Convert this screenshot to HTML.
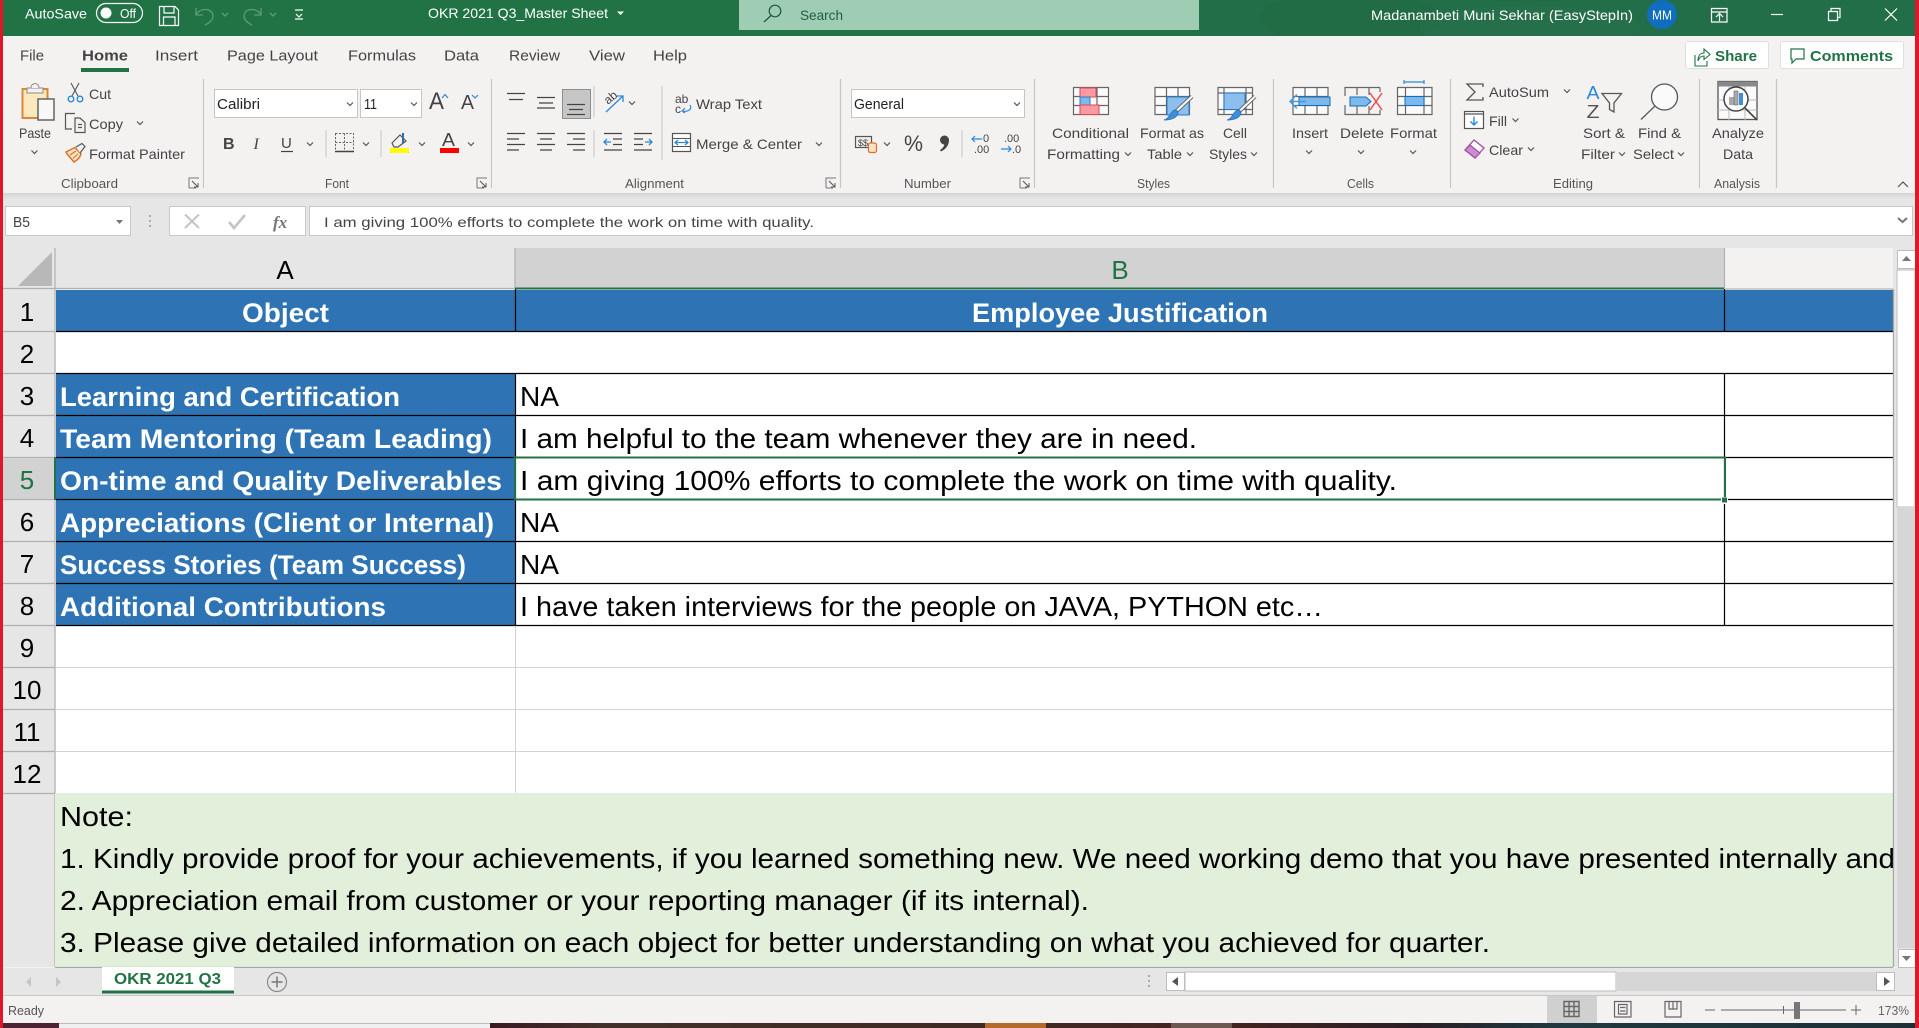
<!DOCTYPE html>
<html><head><meta charset="utf-8"><title>OKR 2021 Q3_Master Sheet</title>
<style>
html,body{margin:0;padding:0;background:#f3f2f1;overflow:hidden}
svg{display:block;position:absolute;left:0;top:0}
text{font-family:"Liberation Sans",sans-serif;white-space:pre}
.r{font-size:14px;fill:#444}
.g{font-size:12.5px;fill:#555}
.t{font-size:15px;fill:#444}
.w{font-size:14px;fill:#fff}
.c{font-size:27.5px;fill:#000}
.b{font-size:27px;fill:#fff;font-weight:bold}
.h{font-size:26px;fill:#000}
</style></head><body>
<svg width="1919" height="1028" viewBox="0 0 1919 1028" xmlns="http://www.w3.org/2000/svg">
<defs>
<path id="c" d="M-3-1.5L0 1.5L3-1.5" fill="none" stroke="#555" stroke-width="1.2"/>
<g id="l"><path d="M-5 5V-5H5" fill="none" stroke="#777" stroke-width="1"/><path d="M-2-2L4 4M4 0V4H0" fill="none" stroke="#555" stroke-width="1"/><path d="M-5 5H2" stroke="#777" stroke-width="1"/></g>
<linearGradient id="sh" x1="0" x2="0" y1="0" y2="1"><stop offset="0" stop-color="#d4d4d4"/><stop offset="1" stop-color="#e6e6e6"/></linearGradient>
<linearGradient id="bs" x1="0" x2="1" y1="0" y2="0">
<stop offset="0" stop-color="#3a1a22"/><stop offset=".08" stop-color="#44302a"/><stop offset=".35" stop-color="#402a22"/><stop offset=".5" stop-color="#47241f"/><stop offset=".65" stop-color="#2a1f26"/><stop offset=".75" stop-color="#1f3a40"/><stop offset="1" stop-color="#1d3036"/></linearGradient>
</defs>

<!-- base -->
<rect width="1919" height="1028" fill="#f3f2f1"/>
<!-- title bar -->
<rect width="1919" height="36" fill="#217346"/>
<rect x="1200" width="719" height="36" fill="#24694a" opacity=".55"/>
<ellipse cx="1350" cy="18" rx="90" ry="26" fill="#1f6a42" opacity=".5"/>
<ellipse cx="1530" cy="28" rx="110" ry="22" fill="#2a6f4e" opacity=".5"/>
<rect y="36" width="1919" height="157" fill="#f3f2f1"/>
<text class="w" x="25" y="18.5" textLength="62" lengthAdjust="spacingAndGlyphs">AutoSave</text>
<rect x="96.5" y="3.5" width="46" height="19" rx="9.5" fill="none" stroke="#fff" stroke-width="1.2"/>
<circle cx="106" cy="13" r="5.5" fill="#fff"/>
<text class="w" style="font-size:12.5px" x="120" y="18" textLength="16" lengthAdjust="spacingAndGlyphs">Off</text>
<path d="M159.5 6.5H175L178.5 10V25.5H159.5Z M164 6.5V13H174V6.5 M163.5 25.5V17H175V25.5" fill="none" stroke="#fff" stroke-width="1.2"/>
<g fill="none" stroke="#5d9c7a" stroke-width="1.3">
<path d="M196 8V15H203 M196 15C200 7 213 8 213 16C213 20 209 23 205 25"/>
<path d="M222 13l3 3l3-3" />
<path d="M261 8V15H254 M261 15C257 7 244 8 244 16C244 20 248 23 252 25"/>
<path d="M270 13l3 3l3-3"/>
</g>
<path d="M295 10H303 M296 14L299 17L302 14M295 19H303" fill="none" stroke="#fff" stroke-width="1.2"/>
<text class="w" x="428" y="18" textLength="180" lengthAdjust="spacingAndGlyphs">OKR 2021 Q3_Master Sheet</text>
<path d="M617 11.5H624L620.5 15Z" fill="#fff"/>
<rect x="739" width="460" height="30" fill="#9fcdb3"/>
<circle cx="775" cy="11" r="5.8" fill="none" stroke="#1c5a39" stroke-width="1.2"/>
<path d="M771 15.5L764 22" stroke="#1c5a39" stroke-width="1.3"/>
<text x="800" y="20" font-size="14" fill="#1f5f3e" textLength="43" lengthAdjust="spacingAndGlyphs">Search</text>
<text class="w" x="1371" y="20" textLength="262" lengthAdjust="spacingAndGlyphs">Madanambeti Muni Sekhar (EasyStepIn)</text>
<ellipse cx="1662" cy="14.5" rx="15" ry="14.5" fill="#106ebe"/>
<text x="1652" y="19.5" font-size="13" fill="#fff" textLength="20" lengthAdjust="spacingAndGlyphs">MM</text>
<path d="M1711.5 8.5H1727V22H1711.5Z M1711.5 12H1727 M1716 17L1719.5 13.5L1723 17 M1719.5 14V21" fill="none" stroke="#fff" stroke-width="1.2"/>
<path d="M1771 14.5H1783" stroke="#fff" stroke-width="1.2"/>
<path d="M1828.5 11.5H1837.5V20.5H1828.5Z M1831 11V8.5H1840V17.5H1838" fill="none" stroke="#fff" stroke-width="1.2"/>
<path d="M1885 8.5L1897 20.5M1897 8.5L1885 20.5" stroke="#fff" stroke-width="1.2"/>

<!-- tabs -->
<text class="t" x="20" y="60.5" textLength="24" lengthAdjust="spacingAndGlyphs">File</text>
<text class="t" x="82" y="60.5" textLength="46" lengthAdjust="spacingAndGlyphs" style="font-weight:bold">Home</text>
<text class="t" x="155" y="60.5" textLength="43" lengthAdjust="spacingAndGlyphs">Insert</text>
<text class="t" x="227" y="60.5" textLength="91" lengthAdjust="spacingAndGlyphs">Page Layout</text>
<text class="t" x="348" y="60.5" textLength="68" lengthAdjust="spacingAndGlyphs">Formulas</text>
<text class="t" x="444" y="60.5" textLength="35" lengthAdjust="spacingAndGlyphs">Data</text>
<text class="t" x="509" y="60.5" textLength="51" lengthAdjust="spacingAndGlyphs">Review</text>
<text class="t" x="589" y="60.5" textLength="36" lengthAdjust="spacingAndGlyphs">View</text>
<text class="t" x="653" y="60.5" textLength="34" lengthAdjust="spacingAndGlyphs">Help</text>
<rect x="81" y="68" width="48" height="4" fill="#217346"/>
<!-- share/comments -->
<rect x="1685.5" y="41.5" width="83" height="27" rx="2" fill="#fff" stroke="#e1dfdd"/>
<path d="M1695 55V66H1707V61 M1698 61C1698 55 1701 53 1704 53V49L1710 54.5L1704 59.5V56C1701 56 1699 58 1698 61Z" fill="none" stroke="#217346" stroke-width="1.1"/>
<text x="1715" y="61" font-size="15" font-weight="bold" fill="#217346" textLength="42" lengthAdjust="spacingAndGlyphs">Share</text>
<rect x="1780.5" y="41.5" width="123" height="27" rx="2" fill="#fff" stroke="#e1dfdd"/>
<path d="M1791 49H1804V59H1796L1792 63V59H1791Z" fill="none" stroke="#217346" stroke-width="1.2"/>
<text x="1810" y="61" font-size="15" font-weight="bold" fill="#217346" textLength="83" lengthAdjust="spacingAndGlyphs">Comments</text>

<!-- ribbon shadow -->
<rect x="3" y="193" width="1912" height="55" fill="#e6e6e6"/>
<rect x="3" y="193" width="1912" height="6" fill="url(#sh)"/>

<!-- group separators -->
<g stroke="#c8c6c4" stroke-width="1.2">
<path d="M203.5 79V188M491.5 79V188M840.5 79V188M1034.5 79V188M1273.5 79V188M1450.5 79V188M1699.5 79V188M1776.5 79V188"/>
<path d="M326 130V157M381 130V157M594 86V117M594 130V157M662 86V160M962 130V157" stroke="#d0cecc"/>
</g>
<!-- group labels -->
<text class="g" x="61" y="188" textLength="57" lengthAdjust="spacingAndGlyphs">Clipboard</text>
<text class="g" x="325" y="188" textLength="24" lengthAdjust="spacingAndGlyphs">Font</text>
<text class="g" x="625" y="188" textLength="59" lengthAdjust="spacingAndGlyphs">Alignment</text>
<text class="g" x="904" y="188" textLength="47" lengthAdjust="spacingAndGlyphs">Number</text>
<text class="g" x="1137" y="188" textLength="33" lengthAdjust="spacingAndGlyphs">Styles</text>
<text class="g" x="1347" y="188" textLength="27" lengthAdjust="spacingAndGlyphs">Cells</text>
<text class="g" x="1553" y="188" textLength="40" lengthAdjust="spacingAndGlyphs">Editing</text>
<text class="g" x="1714" y="188" textLength="46" lengthAdjust="spacingAndGlyphs">Analysis</text>
<use href="#l" x="194" y="183"/><use href="#l" x="482" y="183"/><use href="#l" x="831" y="183"/><use href="#l" x="1025" y="183"/>
<path d="M1898 187L1903 182L1908 187" fill="none" stroke="#555" stroke-width="1.2"/>

<!-- clipboard -->
<rect x="22.5" y="89" width="25" height="29" fill="#fce8bd" stroke="#d98a36" stroke-width="2"/>
<rect x="27" y="88" width="16" height="5" fill="#f3f2f1" stroke="#8a8a8a"/>
<path d="M31 88C31 82 39 82 39 88" fill="#f3f2f1" stroke="#8a8a8a"/>
<rect x="38" y="99" width="16" height="21" fill="#f7f7f7" stroke="#5a5a5a" stroke-width="1.4"/>
<text class="r" x="19" y="138" textLength="32" lengthAdjust="spacingAndGlyphs">Paste</text>
<use href="#c" x="34.5" y="152"/>
<path d="M71 83L78 96M79 83L72 96" stroke="#555" stroke-width="1.1"/>
<circle cx="71" cy="99" r="2.8" fill="none" stroke="#2b88d8" stroke-width="1.4"/><circle cx="80" cy="99" r="2.8" fill="none" stroke="#2b88d8" stroke-width="1.4"/>
<text class="r" x="89" y="99" textLength="22" lengthAdjust="spacingAndGlyphs">Cut</text>
<path d="M72 129H65.5V113.5H75M75 118H80L85 122.5V132.5H75Z M78 124.5H82M78 127.5H82" fill="none" stroke="#555" stroke-width="1.2"/>
<text class="r" x="89" y="129" textLength="34" lengthAdjust="spacingAndGlyphs">Copy</text>
<use href="#c" x="140" y="123"/>
<path d="M66 152L75 147.5L81 154C80 158 77 160 74 162C71 158 68 156 66 152Z" fill="#fbe3c4" stroke="#d9702b" stroke-width="1.5"/>
<path d="M70 155L76 151M73 158.5L78 154" stroke="#d9702b" stroke-width="1.1"/>
<path d="M76 147L82 143.5L85 146.500L80 153" fill="#f3f2f1" stroke="#555" stroke-width="1.2"/>
<text class="r" x="89" y="159" textLength="96" lengthAdjust="spacingAndGlyphs">Format Painter</text>

<!-- font -->
<rect x="214.5" y="89.5" width="143" height="28" fill="#fff" stroke="#c8c6c4"/>
<rect x="360.5" y="89.5" width="61" height="28" fill="#fff" stroke="#c8c6c4"/>
<text x="217" y="109" font-size="15" fill="#222" textLength="43" lengthAdjust="spacingAndGlyphs">Calibri</text>
<text x="364" y="109" font-size="15" fill="#222" textLength="13" lengthAdjust="spacingAndGlyphs">11</text>
<use href="#c" x="350" y="104"/><use href="#c" x="414" y="104"/>
<text x="429" y="109" font-size="24" fill="#444" textLength="15" lengthAdjust="spacingAndGlyphs">A</text>
<path d="M442 98L445 94.5L448 98" fill="none" stroke="#2b88d8" stroke-width="1.2"/>
<text x="461" y="109" font-size="20" fill="#444" textLength="13" lengthAdjust="spacingAndGlyphs">A</text>
<path d="M472 95L475 98L478 95" fill="none" stroke="#2b88d8" stroke-width="1.2"/>
<text x="223" y="149" font-size="16" font-weight="bold" fill="#444">B</text>
<text x="253.5" y="149" font-size="16" font-style="italic" fill="#444" style="font-family:'Liberation Serif',serif">I</text>
<text x="281" y="148" font-size="15" fill="#444">U</text><path d="M281 151.5H293" stroke="#444" stroke-width="1.2"/>
<use href="#c" x="310" y="144"/>
<path d="M335.5 133.5H353.5V151.5H335.5Z M344.5 133.5V151.5M335.5 142.5H353.5" fill="none" stroke="#666" stroke-width="1" stroke-dasharray="2 1.5"/><path d="M335 151.5H354" stroke="#444" stroke-width="1.5"/>
<use href="#c" x="366" y="144"/>
<path d="M392 143L400 135L406 141L398 147H394Z" fill="none" stroke="#555" stroke-width="1.2"/><path d="M403 133V143" stroke="#2b6cb0" stroke-width="2"/>
<rect x="390" y="148" width="19" height="5" fill="#ff0"/>
<use href="#c" x="422" y="144"/>
<text x="442" y="146" font-size="18" fill="#444" textLength="13" lengthAdjust="spacingAndGlyphs">A</text>
<rect x="440" y="148" width="19" height="5" fill="#f00"/>
<use href="#c" x="471" y="144"/>

<!-- alignment -->
<rect x="562.5" y="89.5" width="28" height="29" fill="#c6c6c6" stroke="#8e8e8e"/>
<g stroke="#444" stroke-width="1.3">
<path d="M507 93.5H525M509 99.5H523"/>
<path d="M537 97.5H555M539 103H553M537 108H555"/>
<path d="M567 104.5H585M569 109.5H583M567 114.5H585"/>
<path d="M507 133.5H525M507 139H519M507 144.5H525M507 150H519"/>
<path d="M537 133.5H555M540 139H552M537 144.5H555M540 150H552"/>
<path d="M567 133.5H585M573 139H585M567 144.5H585M573 150H585"/>
<path d="M604 133.5H622M613 139H622M613 144.5H622M604 150H622"/>
<path d="M634 133.5H652M634 139H643M634 144.5H643M634 150H652"/>
</g>
<path d="M604 142H611M607 139L604 142L607 145" fill="none" stroke="#2b88d8" stroke-width="1.3"/>
<path d="M645 142H652M649 139L652 142L649 145" fill="none" stroke="#2b88d8" stroke-width="1.3"/>
<text x="604" y="102" font-size="12" fill="#444" transform="rotate(-40 610 98)">ab</text>
<path d="M606 112L623 96M617 96H623V102" fill="none" stroke="#2b88d8" stroke-width="1.3"/>
<use href="#c" x="632" y="103"/>
<text x="675" y="103" font-size="12" fill="#444">ab</text><text x="675" y="113" font-size="12" fill="#444">c</text>
<path d="M690 105C693 110 687 112 682 111M685 108L682 111L685 113" fill="none" stroke="#2b88d8" stroke-width="1.2"/>
<text class="r" x="696" y="109" textLength="66" lengthAdjust="spacingAndGlyphs">Wrap Text</text>
<rect x="672.5" y="133.5" width="18" height="18" fill="#fff" stroke="#555" stroke-width="1.2"/>
<path d="M672.5 138.5H690.5M672.5 146.5H690.5" stroke="#555" stroke-width="1"/>
<path d="M675 142.5H688M678 140L675 142.5L678 145M685 140L688 142.5L685 145" fill="none" stroke="#2b88d8" stroke-width="1.3"/>
<text class="r" x="696" y="149" textLength="106" lengthAdjust="spacingAndGlyphs">Merge &amp; Center</text>
<use href="#c" x="819" y="144"/>

<!-- number -->
<rect x="851.5" y="89.5" width="173" height="28" fill="#fff" stroke="#c8c6c4"/>
<text x="854" y="109" font-size="15" fill="#222" textLength="50" lengthAdjust="spacingAndGlyphs">General</text>
<use href="#c" x="1017" y="104"/>
<rect x="855.5" y="136.5" width="16" height="11" fill="#eee" stroke="#555" stroke-width="1.2"/>
<text x="858" y="146" font-size="9" fill="#444">$$</text>
<rect x="868.5" y="143" width="8" height="9.5" rx="2" fill="#fbe3c4" stroke="#d9702b" stroke-width="1.2"/>
<use href="#c" x="887" y="144"/>
<text x="904" y="151" font-size="22" fill="#444" textLength="19" lengthAdjust="spacingAndGlyphs">%</text>
<path d="M940 140a4.5 4.5 0 1 1 9 0c0 6-4 9.500-8 11.500l-1-1.500c3-2 4-3.500 4.300-5.500a4.500 4.500 0 0 1-4.300-4.500Z" fill="#444"/>
<text x="983" y="142" font-size="11" fill="#444">0</text><text x="974" y="153" font-size="11" fill="#444">.00</text>
<path d="M972 139H982M975 136L972 139L975 142" fill="none" stroke="#2b88d8" stroke-width="1.2"/>
<text x="1004" y="142" font-size="11" fill="#444">.00</text><text x="1012" y="153" font-size="11" fill="#444">.0</text>
<path d="M1001 149H1011M1008 146L1011 149L1008 152" fill="none" stroke="#2b88d8" stroke-width="1.2"/>

<!-- styles: conditional -->
<g fill="#fbfbfb" stroke="#666" stroke-width="1.2">
<path d="M1073.5 87.5H1108.5V114.5H1073.5ZM1073.5 96.5H1108.5M1073.5 105.5H1108.5M1085 87.5V114.5M1097 87.5V114.5"/>
</g>
<rect x="1080" y="88" width="16" height="9" fill="#fb9aa3" stroke="#e0474f"/>
<rect x="1080" y="97" width="10" height="8" fill="#7fb8ea" stroke="#2b78c5"/>
<rect x="1080" y="105" width="19" height="9.5" fill="#fb9aa3" stroke="#e0474f"/>
<text class="r" x="1052" y="138" textLength="77" lengthAdjust="spacingAndGlyphs">Conditional</text>
<text class="r" x="1047" y="159" textLength="73" lengthAdjust="spacingAndGlyphs">Formatting</text>
<use href="#c" x="1128" y="154"/>
<!-- format as table -->
<g fill="#fbfbfb" stroke="#666" stroke-width="1.2"><path d="M1155 87.5H1189.5V114.5H1155ZM1155 96.5H1189.5M1155 105.5H1189.5M1166.5 87.5V114.5M1178 87.5V114.5"/></g>
<rect x="1167" y="97" width="22" height="18" fill="#8cbfee" stroke="#2b78c5"/>
<path d="M1192 96.5L1176 111.500" stroke="#666" stroke-width="4"/><path d="M1192 96.5L1176 111.500" stroke="#fff" stroke-width="2"/>
<path d="M1164 120C1170 119 1170 111 1175 110C1181 111 1178 120 1164 120Z" fill="#3f8fd8" stroke="#2b78c5"/>
<text class="r" x="1140" y="138" textLength="64" lengthAdjust="spacingAndGlyphs">Format as</text>
<text class="r" x="1147" y="159" textLength="35" lengthAdjust="spacingAndGlyphs">Table</text>
<use href="#c" x="1190" y="154"/>
<!-- cell styles -->
<g fill="#fbfbfb" stroke="#666" stroke-width="1.2"><path d="M1218 87.5H1252.5V114.5H1218ZM1218 93H1252.500M1218 109.500H1252.500M1224 87.5V114.5M1246 87.500V114.500"/></g>
<rect x="1224" y="93" width="21" height="16.500" fill="#8cbfee" stroke="#2b78c5"/>
<path d="M1255 96.5L1239 111.500" stroke="#666" stroke-width="4"/><path d="M1255 96.5L1239 111.500" stroke="#fff" stroke-width="2"/>
<path d="M1227 120C1233 119 1233 111 1238 110C1244 111 1241 120 1227 120Z" fill="#3f8fd8" stroke="#2b78c5"/>
<text class="r" x="1223" y="138" textLength="24" lengthAdjust="spacingAndGlyphs">Cell</text>
<text class="r" x="1209" y="159" textLength="38" lengthAdjust="spacingAndGlyphs">Styles</text>
<use href="#c" x="1254" y="154"/>

<!-- cells: insert -->
<g fill="#fbfbfb" stroke="#666" stroke-width="1.2"><path d="M1293 87.5H1328V114.5H1293ZM1293 96.5H1328M1293 105.5H1328M1305 87.5V114.5M1317 87.5V114.5"/></g>
<rect x="1299" y="97" width="31" height="8.5" fill="#7fb8ea" stroke="#106ebe"/>
<path d="M1290 101.5H1306M1297 94.5L1290 101.5L1297 108.5" fill="none" stroke="#3f9ae0" stroke-width="1.4"/>
<text class="r" x="1292" y="138" textLength="36" lengthAdjust="spacingAndGlyphs">Insert</text>
<use href="#c" x="1309" y="152"/>
<!-- delete -->
<g fill="none" stroke="#666" stroke-width="1.2"><path d="M1345 96V87.5H1380M1345 105V114.5H1380V110M1380 87.5V92M1357 87.5V95M1369 87.5V95M1357 106V114.5M1369 106V114.5"/></g>
<path d="M1350 97H1366L1371 101.5L1366 106H1350Z" fill="#7fb8ea" stroke="#106ebe"/>
<path d="M1370 93L1382 110M1382 93L1370 110" stroke="#e84d4d" stroke-width="1.5"/>
<text class="r" x="1340" y="138" textLength="44" lengthAdjust="spacingAndGlyphs">Delete</text>
<use href="#c" x="1361" y="152"/>
<!-- format -->
<path d="M1404 82H1424M1404 80V84M1424 80V84" stroke="#2b88d8" stroke-width="1.2" fill="none"/>
<g fill="#fbfbfb" stroke="#666" stroke-width="1.2"><path d="M1397.5 87.5H1432V114.5H1397.5ZM1397.5 96.5H1432M1397.5 105.5H1432M1405.5 87.5V114.5M1424 87.5V114.5"/></g>
<rect x="1405" y="96.5" width="19" height="9" fill="#7fb8ea" stroke="#106ebe"/>
<text class="r" x="1390" y="138" textLength="47" lengthAdjust="spacingAndGlyphs">Format</text>
<use href="#c" x="1413" y="152"/>

<!-- editing -->
<path d="M1483 87V84H1467L1475 92L1467 100H1483V97" fill="none" stroke="#555" stroke-width="1.3"/>
<text class="r" x="1489" y="97" textLength="60" lengthAdjust="spacingAndGlyphs">AutoSum</text>
<use href="#c" x="1567" y="91"/>
<rect x="1464.5" y="111.5" width="19" height="17" fill="#fff" stroke="#555" stroke-width="1.2"/><path d="M1464.5 114H1483.5" stroke="#555" stroke-width="1.2"/>
<path d="M1474 116.5V125M1470.5 121.5L1474 125L1477.5 121.5" fill="none" stroke="#2b88d8" stroke-width="1.4"/>
<text class="r" x="1489" y="126" textLength="18" lengthAdjust="spacingAndGlyphs">Fill</text>
<use href="#c" x="1515.5" y="120"/>
<path d="M1474 140L1484 148L1475 158L1465 150Z" fill="#fff" stroke="#a349a4" stroke-width="1.3"/>
<path d="M1465 150L1470 145L1480 153L1475 158Z" fill="#c98fcc" stroke="#a349a4" stroke-width="1.2"/>
<text class="r" x="1489" y="155" textLength="34" lengthAdjust="spacingAndGlyphs">Clear</text>
<use href="#c" x="1531" y="149"/>
<text x="1586.5" y="99" font-size="18" fill="#2b88d8" textLength="13" lengthAdjust="spacingAndGlyphs">A</text>
<text x="1586.5" y="118" font-size="18" fill="#555" textLength="13" lengthAdjust="spacingAndGlyphs">Z</text>
<path d="M1602 93.5H1621.5L1614 103V112L1609.5 109.5V103Z" fill="none" stroke="#555" stroke-width="1.3"/>
<text class="r" x="1583" y="138" textLength="42" lengthAdjust="spacingAndGlyphs">Sort &amp;</text>
<text class="r" x="1581" y="159" textLength="34" lengthAdjust="spacingAndGlyphs">Filter</text>
<use href="#c" x="1622" y="154"/>
<circle cx="1664.5" cy="97" r="13" fill="#fafafa" stroke="#555" stroke-width="1.3"/>
<path d="M1655 106L1641 119.5" stroke="#555" stroke-width="1.3"/>
<text class="r" x="1638" y="138" textLength="43" lengthAdjust="spacingAndGlyphs">Find &amp;</text>
<text class="r" x="1633" y="159" textLength="41" lengthAdjust="spacingAndGlyphs">Select</text>
<use href="#c" x="1681" y="154"/>

<!-- analyze -->
<rect x="1718" y="81.5" width="39" height="38" fill="#fafafa" stroke="#555" stroke-width="1.3"/>
<rect x="1718" y="81.5" width="39" height="5" fill="#888"/>
<path d="M1718 100H1757M1718 110H1757M1729 86V120M1745 86V120" stroke="#bbb" stroke-width="1"/>
<circle cx="1736" cy="99" r="12" fill="#fff" stroke="#444" stroke-width="1.5"/>
<rect x="1729" y="97" width="5" height="8" fill="#aaa"/><rect x="1734" y="91" width="4" height="14" fill="#aaa" stroke="#666" stroke-width=".6"/><rect x="1739" y="93" width="4" height="12" fill="#3f8fd8"/>
<path d="M1745 108L1757 120" stroke="#444" stroke-width="1.6"/>
<text class="r" x="1712" y="138" textLength="52" lengthAdjust="spacingAndGlyphs">Analyze</text>
<text class="r" x="1723" y="159" textLength="30" lengthAdjust="spacingAndGlyphs">Data</text>

<!-- formula bar -->
<rect x="5.5" y="206.5" width="125" height="29" fill="#fff" stroke="#c8c8c8"/>
<text x="13" y="227" font-size="14.5" fill="#444" textLength="17" lengthAdjust="spacingAndGlyphs">B5</text>
<path d="M116 220H123L119.5 224Z" fill="#777"/>
<path d="M150 215v2M150 220v2M150 225v2" stroke="#aaa" stroke-width="2"/>
<rect x="169.5" y="206.5" width="136" height="29" fill="#fff" stroke="#c8c8c8"/>
<path d="M185 214.5L199 228M199 214.5L185 228" stroke="#c4c4c4" stroke-width="2"/>
<path d="M229 222L234 228L245 215" fill="none" stroke="#c4c4c4" stroke-width="2.6"/>
<text x="273" y="228" font-size="17" font-style="italic" fill="#777" style="font-family:'Liberation Serif',serif;font-weight:bold">fx</text>
<rect x="309.5" y="206.5" width="1603" height="29" fill="#fff" stroke="#c8c8c8"/>
<text x="324" y="227" font-size="14" fill="#444" textLength="490" lengthAdjust="spacingAndGlyphs">I am giving 100% efforts to complete the work on time with quality.</text>
<path d="M1898 218L1902.5 222L1907 218" fill="none" stroke="#777" stroke-width="2"/>

<!-- headers -->
<rect x="3" y="248" width="52" height="719" fill="#e6e6e6"/>
<rect x="55" y="248" width="460" height="41" fill="#e6e6e6"/>
<rect x="515" y="248" width="1209" height="41" fill="#d2d2d2"/>
<path d="M18 286H52V252Z" fill="#b8b8b8"/>
<path d="M3 288.5H515M55 248V967M515 248V288M1724.5 248V288" stroke="#b0b0b0" stroke-width="1.2" fill="none"/>
<rect x="515" y="287.5" width="1209" height="2" fill="#217346"/>
<path d="M1724 289H1893" stroke="#a6a6a6"/>
<text class="h" x="285" y="279" text-anchor="middle">A</text>
<text class="h" x="1120" y="279" text-anchor="middle" style="fill:#217346">B</text>
<!-- row header separators -->
<path d="M3 331.5H55M3 373.5H55M3 415.5H55M3 457.5H55M3 499.5H55M3 541.5H55M3 583.5H55M3 625.5H55M3 667.5H55M3 709.5H55M3 751.5H55M3 793.5H55" stroke="#b0b0b0" stroke-width="1.2"/>
<rect x="3" y="458" width="52" height="41" fill="#d2d2d2"/>
<rect x="54" y="457" width="2" height="43" fill="#217346"/>
<text class="h" x="27" y="321" text-anchor="middle">1</text>
<text class="h" x="27" y="363" text-anchor="middle">2</text>
<text class="h" x="27" y="405" text-anchor="middle">3</text>
<text class="h" x="27" y="447" text-anchor="middle">4</text>
<text class="h" x="27" y="489" text-anchor="middle" style="fill:#217346">5</text>
<text class="h" x="27" y="531" text-anchor="middle">6</text>
<text class="h" x="27" y="573" text-anchor="middle">7</text>
<text class="h" x="27" y="615" text-anchor="middle">8</text>
<text class="h" x="27" y="657" text-anchor="middle">9</text>
<text class="h" x="27" y="699" text-anchor="middle">10</text>
<text class="h" x="27" y="741" text-anchor="middle">11</text>
<text class="h" x="27" y="783" text-anchor="middle">12</text>

<!-- sheet -->
<rect x="56" y="290" width="1837" height="503" fill="#fff"/>
<rect x="56" y="290" width="1837" height="41" fill="#2e74b5"/>
<rect x="56" y="374" width="459" height="251" fill="#2e74b5"/>
<path d="M56 667.5H1893M56 709.5H1893M56 751.5H1893M515.5 625V793" stroke="#d4d4d4"/>
<g stroke="#000" stroke-width="1.2">
<path d="M56 331.5H1893M56 373.5H1893M56 415.5H1893M56 457.5H1893M56 499.5H1893M56 541.5H1893M56 583.5H1893M515 625.5H1893M56 625.5H515"/>
<path d="M515.5 289V331M1724.5 289V331M515.5 373V625M1724.5 373V625"/>
</g>
<rect x="55" y="793" width="1838" height="174" fill="#e2efda"/>

<text class="b" x="242" y="322" textLength="87" lengthAdjust="spacingAndGlyphs">Object</text>
<text class="b" x="972" y="322" textLength="296" lengthAdjust="spacingAndGlyphs">Employee Justification</text>
<text class="b" x="60" y="406" textLength="340" lengthAdjust="spacingAndGlyphs">Learning and Certification</text>
<text class="b" x="60" y="448" textLength="432" lengthAdjust="spacingAndGlyphs">Team Mentoring (Team Leading)</text>
<text class="b" x="60" y="490" textLength="442" lengthAdjust="spacingAndGlyphs">On-time and Quality Deliverables</text>
<text class="b" x="60" y="532" textLength="434" lengthAdjust="spacingAndGlyphs">Appreciations (Client or Internal)</text>
<text class="b" x="60" y="574" textLength="406" lengthAdjust="spacingAndGlyphs">Success Stories (Team Success)</text>
<text class="b" x="60" y="616" textLength="326" lengthAdjust="spacingAndGlyphs">Additional Contributions</text>
<text class="c" x="520" y="406" textLength="39" lengthAdjust="spacingAndGlyphs">NA</text>
<text class="c" x="520" y="448" textLength="677" lengthAdjust="spacingAndGlyphs">I am helpful to the team whenever they are in need.</text>
<text class="c" x="520" y="490" textLength="877" lengthAdjust="spacingAndGlyphs">I am giving 100% efforts to complete the work on time with quality.</text>
<text class="c" x="520" y="532" textLength="39" lengthAdjust="spacingAndGlyphs">NA</text>
<text class="c" x="520" y="574" textLength="39" lengthAdjust="spacingAndGlyphs">NA</text>
<text class="c" x="520" y="616" textLength="803" lengthAdjust="spacingAndGlyphs">I have taken interviews for the people on JAVA, PYTHON etc…</text>
<text class="c" x="60" y="826" textLength="73" lengthAdjust="spacingAndGlyphs">Note:</text>
<text class="c" x="60" y="868" textLength="1835" lengthAdjust="spacingAndGlyphs">1. Kindly provide proof for your achievements, if you learned something new. We need working demo that you have presented internally and</text>
<text class="c" x="60" y="910" textLength="1029" lengthAdjust="spacingAndGlyphs">2. Appreciation email from customer or your reporting manager (if its internal).</text>
<text class="c" x="60" y="952" textLength="1430" lengthAdjust="spacingAndGlyphs">3. Please give detailed information on each object for better understanding on what you achieved for quarter.</text>

<!-- selection -->
<path d="M515 457.5H1725V499.5H515Z" fill="none" stroke="#217346" stroke-width="2"/>
<rect x="1721" y="497" width="7" height="7" fill="#fff"/>
<rect x="1722" y="497.5" width="5" height="5" fill="#217346"/>

<!-- v-scroll -->
<rect x="1893" y="248" width="22" height="719" fill="#e6e6e6"/>
<path d="M1893.5 289V967M55 967.5H1893" stroke="#a6a6a6" stroke-width="1.3"/>
<rect x="1897.5" y="250.5" width="18" height="18" fill="#fff" stroke="#bdbdbd"/>
<path d="M1902 261L1906.5 256L1911 261Z" fill="#777"/>
<rect x="1897" y="270" width="18" height="237" fill="#fff" stroke="#bdbdbd"/>
<rect x="1897" y="507" width="18" height="441" fill="#d6d6d6"/>
<rect x="1898.5" y="949.5" width="17" height="18" fill="#fff" stroke="#bdbdbd"/>
<path d="M1902 956L1906.5 961L1911 956Z" fill="#777"/>

<!-- tab bar -->
<rect x="3" y="968" width="1912" height="28" fill="#e6e6e6"/>
<rect x="3" y="995" width="1912" height="1" fill="#c8c8c8"/>
<path d="M31 977V987L26 982ZM56 977V987L61 982Z" fill="#c4c4c4"/>
<rect x="102" y="967" width="132" height="26" fill="#fff"/>
<rect x="102" y="990.5" width="132" height="3" fill="#217346"/>
<text x="114" y="984" font-size="16" font-weight="bold" fill="#217346" textLength="107" lengthAdjust="spacingAndGlyphs">OKR 2021 Q3</text>
<circle cx="277" cy="982" r="9.5" fill="none" stroke="#8a8a8a" stroke-width="1.2"/>
<path d="M271.5 982H282.5M277 976.5V987.5" stroke="#777" stroke-width="1.5"/>
<path d="M1149 975v2M1149 980v2M1149 985v2" stroke="#aaa" stroke-width="2"/>
<rect x="1166.5" y="972.5" width="18" height="18" fill="#fff" stroke="#bdbdbd"/>
<path d="M1178 977V986L1172 981.5Z" fill="#555"/>
<rect x="1185" y="972" width="431" height="19" fill="#fff" stroke="#bdbdbd"/>
<rect x="1616" y="972" width="260" height="19" fill="#d6d6d6"/>
<rect x="1876.5" y="972.5" width="18" height="18" fill="#fff" stroke="#bdbdbd"/>
<path d="M1884 977V986L1890 981.5Z" fill="#555"/>

<!-- status bar -->
<text x="8" y="1015" font-size="13" fill="#555" textLength="36" lengthAdjust="spacingAndGlyphs">Ready</text>
<rect x="1547" y="996" width="50" height="27" fill="#d0d0d0"/>
<g fill="none" stroke="#666" stroke-width="1.4">
<path d="M1564 1001.5H1579V1016.5H1564ZM1569 1001.5V1016.5M1574 1001.5V1016.5M1564 1006.5H1579M1564 1011.5H1579"/>
<path d="M1614.5 1001.5H1631V1017H1614.5ZM1618.5 1004.5H1627V1014H1618.5ZM1620 1007.5H1625.5M1620 1011H1625.5" stroke-width="1.2"/>
<path d="M1665 1001.5H1681V1017H1665ZM1669 1001.5V1009H1677V1001.5M1673 1001.5V1009" stroke-width="1.2"/>
</g>
<path d="M1705 1010H1715M1721 1010H1846M1783.5 1006V1014M1851 1010H1861M1856 1005V1015" stroke="#666" stroke-width="1"/>
<rect x="1794" y="1002" width="6" height="17" fill="#777"/>
<text x="1878" y="1015" font-size="12.5" fill="#666" textLength="31" lengthAdjust="spacingAndGlyphs">173%</text>

<!-- bottom strip -->
<rect x="490" y="1023" width="1429" height="5" fill="url(#bs)"/>
<rect x="3" y="1023" width="56" height="5" fill="#4d2233"/>
<rect x="59" y="1023" width="431" height="5" fill="#f0f0f0"/>
<rect x="59" y="1023" width="431" height="1" fill="#bdbdbd"/>
<rect x="985" y="1023" width="61" height="5" fill="#b56a2c"/>
<rect x="1171" y="1023" width="61" height="5" fill="#6d5850"/>

<!-- red borders -->
<rect x="0" y="0" width="3" height="1028" fill="#e0162b"/>
<rect x="1915" y="0" width="4" height="1028" fill="#e0162b"/>
</svg>
</body></html>
